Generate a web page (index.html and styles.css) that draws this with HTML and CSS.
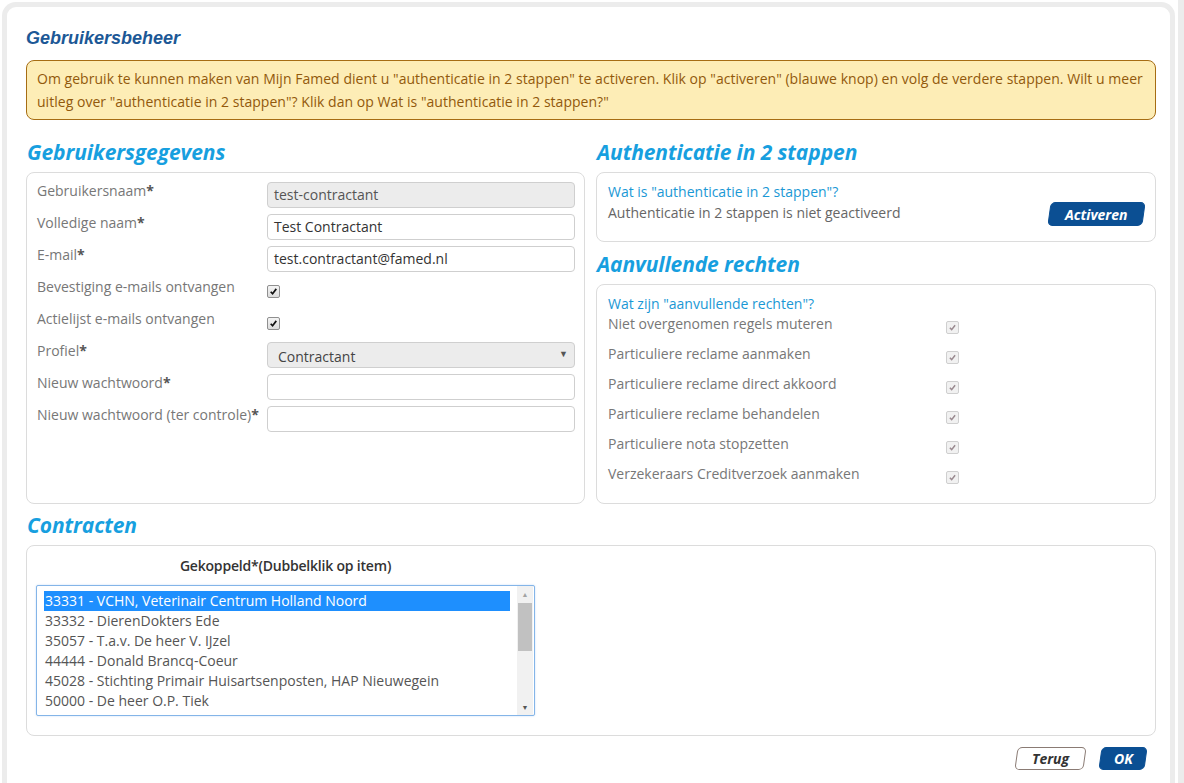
FILE: index.html
```html
<!DOCTYPE html>
<html lang="nl">
<head>
<meta charset="utf-8">
<title>Gebruikersbeheer</title>
<link rel="stylesheet" href="styles.css">
</head>
<body>
<div class="shell">
  <div class="frame">
    <h1 class="page-title">Gebruikersbeheer</h1>
    <div class="alert">Om gebruik te kunnen maken van Mijn Famed dient u "authenticatie in 2 stappen" te activeren. Klik op "activeren" (blauwe knop) en volg de verdere stappen. Wilt u meer uitleg over "authenticatie in 2 stappen"? Klik dan op Wat is "authenticatie in 2 stappen?"</div>

    <div class="columns">
      <div class="col">
        <h2 class="section-title">Gebruikersgegevens</h2>
        <div class="box user-box">
          <div class="form-grid">
            <div class="lbl">Gebruikersnaam<b>*</b></div>
            <div class="field"><div class="input disabled">test-contractant</div></div>

            <div class="lbl">Volledige naam<b>*</b></div>
            <div class="field"><div class="input">Test Contractant</div></div>

            <div class="lbl">E-mail<b>*</b></div>
            <div class="field"><div class="input">test.contractant@famed.nl</div></div>

            <div class="lbl">Bevestiging e-mails ontvangen</div>
            <div class="field check-field"><span class="cb"><svg viewBox="0 0 13 13"><path d="M3.2 6.8 L5.4 9.2 L9.8 3.4" fill="none" stroke="#111" stroke-width="2"/></svg></span></div>

            <div class="lbl">Actielijst e-mails ontvangen</div>
            <div class="field check-field"><span class="cb"><svg viewBox="0 0 13 13"><path d="M3.2 6.8 L5.4 9.2 L9.8 3.4" fill="none" stroke="#111" stroke-width="2"/></svg></span></div>

            <div class="lbl">Profiel<b>*</b></div>
            <div class="field"><div class="input select">Contractant<span class="arrow">&#9660;</span></div></div>

            <div class="lbl">Nieuw wachtwoord<b>*</b></div>
            <div class="field"><div class="input"></div></div>

            <div class="lbl">Nieuw wachtwoord (ter controle)<b>*</b></div>
            <div class="field"><div class="input"></div></div>
          </div>
        </div>
      </div>

      <div class="col">
        <h2 class="section-title">Authenticatie in 2 stappen</h2>
        <div class="box auth-box">
          <div class="auth-text">
            <a class="link">Wat is "authenticatie in 2 stappen"?</a>
            <div class="status">Authenticatie in 2 stappen is niet geactiveerd</div>
          </div>
          <span class="btn btn-primary btn-activeren"><span>Activeren</span></span>
        </div>

        <h2 class="section-title second">Aanvullende rechten</h2>
        <div class="box rights-box">
          <a class="link">Wat zijn "aanvullende rechten"?</a>
          <div class="rights">
            <div class="right-row"><span class="rlbl">Niet overgenomen regels muteren</span><span class="cb dis"><svg viewBox="0 0 13 13"><path d="M3.4 6.8 L5.5 9 L9.6 3.8" fill="none" stroke="#9a8a90" stroke-width="1.8"/></svg></span></div>
            <div class="right-row"><span class="rlbl">Particuliere reclame aanmaken</span><span class="cb dis"><svg viewBox="0 0 13 13"><path d="M3.4 6.8 L5.5 9 L9.6 3.8" fill="none" stroke="#9a8a90" stroke-width="1.8"/></svg></span></div>
            <div class="right-row"><span class="rlbl">Particuliere reclame direct akkoord</span><span class="cb dis"><svg viewBox="0 0 13 13"><path d="M3.4 6.8 L5.5 9 L9.6 3.8" fill="none" stroke="#9a8a90" stroke-width="1.8"/></svg></span></div>
            <div class="right-row"><span class="rlbl">Particuliere reclame behandelen</span><span class="cb dis"><svg viewBox="0 0 13 13"><path d="M3.4 6.8 L5.5 9 L9.6 3.8" fill="none" stroke="#9a8a90" stroke-width="1.8"/></svg></span></div>
            <div class="right-row"><span class="rlbl">Particuliere nota stopzetten</span><span class="cb dis"><svg viewBox="0 0 13 13"><path d="M3.4 6.8 L5.5 9 L9.6 3.8" fill="none" stroke="#9a8a90" stroke-width="1.8"/></svg></span></div>
            <div class="right-row"><span class="rlbl">Verzekeraars Creditverzoek aanmaken</span><span class="cb dis"><svg viewBox="0 0 13 13"><path d="M3.4 6.8 L5.5 9 L9.6 3.8" fill="none" stroke="#9a8a90" stroke-width="1.8"/></svg></span></div>
          </div>
        </div>
      </div>
    </div>

    <h2 class="section-title contracts-title">Contracten</h2>
    <div class="box contracts-box">
      <div class="list-wrap">
        <div class="list-label">Gekoppeld*(Dubbelklik op item)</div>
        <div class="listbox">
          <div class="items">
            <div class="item selected">33331 - VCHN, Veterinair Centrum Holland Noord</div>
            <div class="item">33332 - DierenDokters Ede</div>
            <div class="item">35057 - T.a.v. De heer V. IJzel</div>
            <div class="item">44444 - Donald Brancq-Coeur</div>
            <div class="item">45028 - Stichting Primair Huisartsenposten, HAP Nieuwegein</div>
            <div class="item">50000 - De heer O.P. Tiek</div>
          </div>
          <div class="vscroll">
            <span class="sarrow up">&#9650;</span>
            <span class="thumb"></span>
            <span class="sarrow down">&#9660;</span>
          </div>
        </div>
      </div>
    </div>

    <div class="footer">
      <span class="btn btn-light"><span>Terug</span></span>
      <span class="btn btn-primary btn-ok"><span>OK</span></span>
    </div>
  </div>
  <div class="page-scroll"></div>
</div>
</body>
</html>
```

FILE: styles.css
```css
html, body {
  margin: 0;
  padding: 0;
  background: #ffffff;
  overflow: hidden;
}

body {
  font-family: "Open Sans", "Liberation Sans", sans-serif;
  font-size: 14px;
  color: #777;
}

.shell {
  display: flex;
  height: 783px;
  overflow: hidden;
}

.frame {
  margin: 2px 0 0 2px;
  width: 1130px;
  height: 820px;
  border: 5px solid #ececec;
  border-bottom: none;
  border-radius: 14px 14px 0 0;
  padding: 21px 14px 0 19px;
  box-sizing: content-box;
  flex: none;
}

.page-scroll {
  margin-left: 3px;
  width: 6px;
  background: #ececec;
}

.page-title {
  margin: 0;
  font-family: "Liberation Sans", Arial, sans-serif;
  font-size: 18px;
  line-height: 20px;
  font-weight: bold;
  font-style: italic;
  color: #1c5896;
}

.alert {
  margin-top: 12px;
  border: 1px solid #a66d14;
  border-radius: 8px;
  background: #fdedb6;
  color: #92590c;
  padding: 6px 10px;
  line-height: 23px;
  font-size: 14px;
  letter-spacing: 0.03px;
}

.columns {
  display: grid;
  grid-template-columns: 559px 560px;
  column-gap: 11px;
  margin-top: 19px;
}

.col {
  display: flex;
  flex-direction: column;
}

.section-title {
  margin: 0 0 7px 1px;
  font-family: "Open Sans", sans-serif;
  font-size: 21px;
  line-height: 26px;
  font-weight: 700;
  font-style: italic;
  color: #179fdf;
  letter-spacing: -0.1px;
}

.section-title.second {
  margin-top: 9px;
}

.box {
  border: 1px solid #dcdcdc;
  border-radius: 8px;
  background: #fff;
}

.user-box {
  flex: 1;
  padding: 9px 9px 0 10px;
}

.form-grid {
  display: grid;
  grid-template-columns: 230px 1fr;
  grid-auto-rows: 26px;
  row-gap: 6px;
}

.lbl {
  line-height: 18px;
  color: #777;
  white-space: nowrap;
}

.lbl b {
  color: #555;
}

.field {
  display: flex;
  align-items: center;
}

.input {
  box-sizing: border-box;
  width: 100%;
  height: 26px;
  border: 1px solid #cfcfcf;
  border-radius: 4px;
  padding: 0 6px;
  line-height: 24px;
  color: #333;
  background: #fff;
  white-space: nowrap;
}

.input.disabled {
  background: #ececec;
  color: #555;
}

.input.select {
  position: relative;
  background: #ececec;
  padding-left: 10px;
  line-height: 28px;
  color: #444;
}

.arrow {
  position: absolute;
  right: 6px;
  top: 0;
  font-size: 9px;
  line-height: 22px;
  color: #555;
}

.cb {
  display: inline-block;
  box-sizing: border-box;
  width: 13px;
  height: 13px;
  border: 1px solid #8f8f8f;
  border-radius: 2px;
  background: linear-gradient(#f4f4f4, #dcdcdc);
}

.cb svg {
  display: block;
  width: 11px;
  height: 11px;
}

.check-field .cb {
  margin-top: 1px;
}

.cb.dis {
  border-color: #cfcfcf;
  background: #f1f1f1;
}

.auth-box {
  display: flex;
  justify-content: space-between;
  padding: 8px 11px 15px 11px;
}

.link {
  display: block;
  color: #1a98d5;
  line-height: 21px;
  text-decoration: none;
}

.status {
  line-height: 21px;
  color: #666;
}

.btn {
  display: inline-flex;
  align-items: center;
  justify-content: center;
  box-sizing: border-box;
  height: 24px;
  border-radius: 5px;
  transform: skewX(-8deg);
  font-family: "Open Sans", sans-serif;
  font-weight: 700;
  font-style: italic;
  font-size: 14px;
}

.btn > span {
  display: inline-block;
  transform: skewX(8deg);
}

.btn-primary {
  background: #0b4f93;
  color: #fff;
  border: 1px solid #0b4f93;
}

.btn-activeren {
  width: 95px;
  margin-top: 21px;
}

.rights-box {
  padding: 8px 11px 9px 11px;
}

.right-row {
  display: flex;
  height: 30px;
}

.rlbl {
  width: 338px;
  line-height: 20px;
  color: #777;
}

.right-row .cb {
  margin-top: 7px;
}

.contracts-title {
  margin-top: 8px;
}

.contracts-box {
  padding: 10px 0 19px 9px;
}

.list-wrap {
  width: 499px;
}

.list-label {
  text-align: center;
  font-weight: 600;
  color: #333;
  line-height: 20px;
  margin-bottom: 9px;
  letter-spacing: -0.2px;
}

.listbox {
  display: flex;
  box-sizing: border-box;
  height: 131px;
  border: 1px solid #84b5e8;
  border-radius: 2px;
  box-shadow: 0 0 2px rgba(80, 150, 230, 0.35);
  padding: 5px 1px 0 7px;
  background: #fff;
}

.items {
  width: 467px;
  overflow: hidden;
}

.item {
  height: 20px;
  line-height: 20px;
  padding-left: 1px;
  color: #555;
  white-space: nowrap;
}

.item.selected {
  background: #1e8ffe;
  color: #fff;
}

.vscroll {
  position: relative;
  margin: -5px 0 0 7px;
  width: 16px;
  height: 129px;
  background: #f1f1f1;
}

.sarrow {
  position: absolute;
  left: 0;
  width: 16px;
  text-align: center;
  font-size: 7px;
  line-height: 14px;
  color: #555;
}

.sarrow.up {
  top: 2px;
  color: #a3a3a3;
}

.sarrow.down {
  bottom: 0;
}

.thumb {
  position: absolute;
  left: 1px;
  top: 17px;
  width: 14px;
  height: 48px;
  background: #c1c1c1;
}

.footer {
  display: flex;
  justify-content: flex-end;
  gap: 15px;
  margin-top: 11px;
  padding-right: 10px;
}

.btn-light {
  width: 69px;
  height: 23px;
  border: 1px solid #8a7b74;
  background: #fff;
  color: #333;
}

.btn-ok {
  width: 46px;
  height: 23px;
}
```
